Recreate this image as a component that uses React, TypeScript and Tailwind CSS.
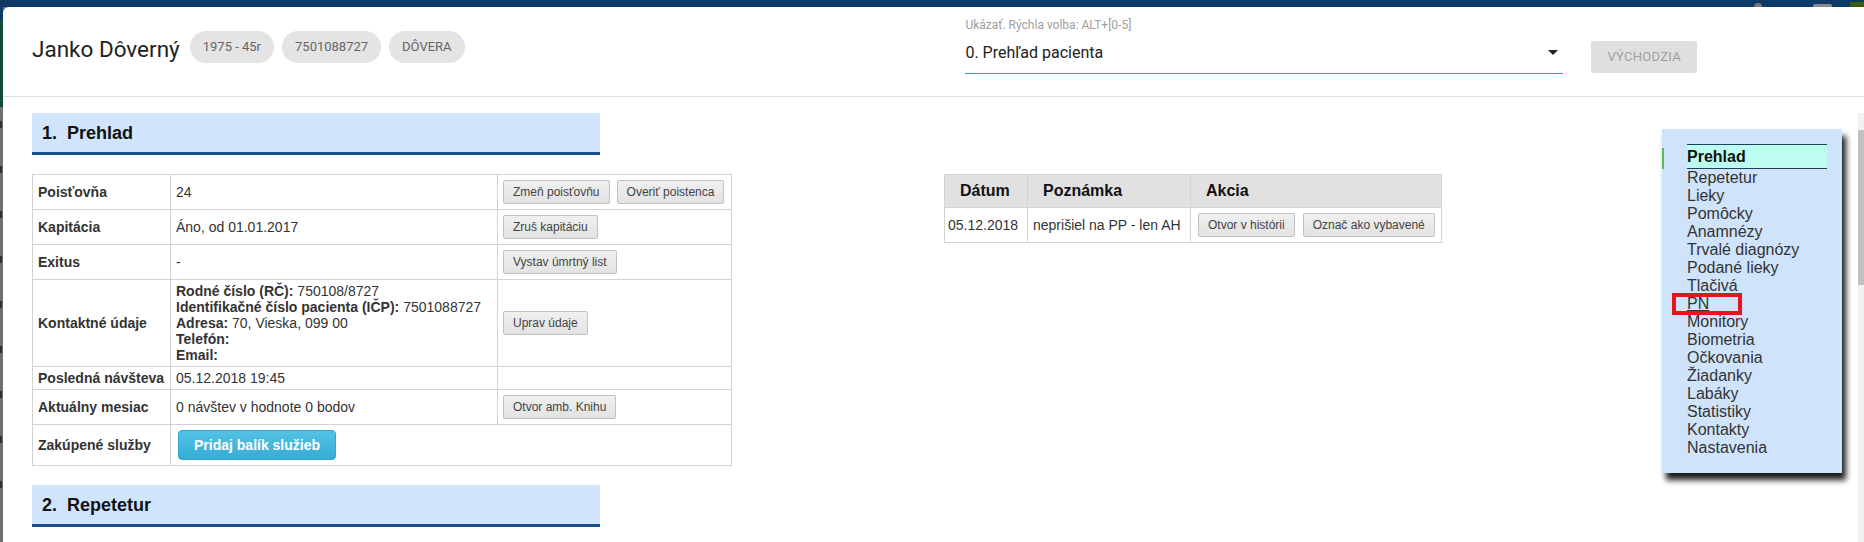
import React from "react";

// ─────────────────────────────────────────────
// Data
// ─────────────────────────────────────────────

const menuItems = [
  "Repetetur",
  "Lieky",
  "Pomôcky",
  "Anamnézy",
  "Trvalé diagnózy",
  "Podané lieky",
  "Tlačivá",
  "PN",
  "Monitory",
  "Biometria",
  "Očkovania",
  "Žiadanky",
  "Labáky",
  "Statistiky",
  "Kontakty",
  "Nastavenia",
];

// ─────────────────────────────────────────────
// Small pieces
// ─────────────────────────────────────────────

function Chip({ children }: { children: React.ReactNode }) {
  return (
    <span className="inline-flex items-center h-[32px] px-[13px] rounded-full bg-[#e4e4e4] text-[13px] text-[#666]">
      {children}
    </span>
  );
}

function GrayBtn({ children }: { children: React.ReactNode }) {
  return (
    <button className="inline-flex items-center h-[24px] my-[2px] px-[9px] rounded-[2px] border border-[#c2c2c2] bg-gradient-to-b from-[#f0f0f0] to-[#e2e2e2] text-[12px] leading-[16px] text-[#444] whitespace-nowrap">
      {children}
    </button>
  );
}

function SectionHeader({ children, className }: { children: React.ReactNode; className?: string }) {
  return (
    <div
      className={
        "w-[568px] h-[42px] bg-[#d0e5fc] border-b-[3px] border-[#1b4f8b] flex items-center pl-[10px] text-[18px] font-bold text-[#111] " +
        (className ?? "")
      }
    >
      {children}
    </div>
  );
}

const td = "border border-[#d3d3d3] px-[5px] py-[3px] align-middle";
const th = "border border-[#d3d3d3] px-[15px] py-[7px] text-left text-[16px] leading-[18px] text-[#111]";

// ─────────────────────────────────────────────
// Page
// ─────────────────────────────────────────────

export default function App() {
  return (
    <div className="relative w-[1864px] h-[542px] overflow-hidden flex flex-col bg-[#6f6f6f] font-['Liberation_Sans',Arial,sans-serif]">
      {/* top strip of the page behind */}
      <div className="relative h-[7px] shrink-0 bg-[#0e3a67]">
        <div className="absolute left-[1754px] top-[3px] w-[8px] h-[4px] rounded-t-full bg-[#777]" />
        <div className="absolute left-[1813px] top-[4px] w-[19px] h-[3px] rounded-t-[2px] bg-[#8a8a8a]" />
        <div className="absolute left-[1850px] top-[2px] w-[14px] h-[5px] bg-[#3b5a12]" />
      </div>

      <div className="flex flex-1 min-h-0">
        {/* left edge of the page behind */}
        <div className="w-[3px] shrink-0 flex flex-col">
          <div className="h-[13px] bg-[#0e3a67]" />
          <div className="h-[87px] bg-[#134a3f]" />
          <div className="flex-1 bg-[#6f6f6f] flex flex-col gap-[38px] pt-[14px]">
            {Array.from({ length: 9 }).map((_, i) => (
              <div key={i} className="h-[7px] w-[2px] bg-[#3a2c20]" />
            ))}
          </div>
        </div>

        {/* Modal */}
        <div className="flex-1 min-w-0 bg-white rounded-tl-[6px] flex flex-col">
          {/* Header */}
          <div className="h-[90px] shrink-0 border-b border-[#e0e0e0] flex pl-[29px] pr-[167px] font-['Roboto',sans-serif]">
            <div className="flex items-center gap-[8px] self-start mt-[21px]">
              <h2 className="text-[22.5px] leading-[32px] text-[#222] mt-[5px] mr-[2px]">Janko Dôverný</h2>
              <Chip>1975 - 45r</Chip>
              <Chip>7501088727</Chip>
              <Chip>DÔVERA</Chip>
            </div>

            <div className="ml-auto w-[598px] self-start mt-[11px]">
              <div className="text-[12px] leading-[14px] text-[#9e9e9e]">Ukázať. Rýchla volba: ALT+[0-5]</div>
              <div className="h-[42px] flex items-center justify-between border-b border-[#26a69a] pr-[5px]">
                <span className="text-[16px] text-[#222]">0. Prehľad pacienta</span>
                <svg width="10" height="5" viewBox="0 0 10 5">
                  <path d="M0 0h10L5 5z" fill="#222" />
                </svg>
              </div>
            </div>

            <button className="self-start mt-[34px] ml-[28px] h-[32px] px-[16px] rounded-[2px] bg-[#dfdfdf] text-[#9f9f9f] text-[13px] tracking-[0.3px] uppercase">
              Východzia
            </button>
          </div>

          {/* Body */}
          <div className="flex-1 min-h-0 flex">
            <div className="flex-1 min-w-0 overflow-hidden pl-[29px] pt-[16px] text-[14px] leading-[16px] text-[#333]">
              <SectionHeader>1.&nbsp; Prehlad</SectionHeader>

              <div className="flex items-start mt-[19px]">
                <table className="table-fixed w-[699px] border-collapse">
                  <colgroup>
                    <col className="w-[138px]" />
                    <col className="w-[327px]" />
                    <col className="w-[234px]" />
                  </colgroup>
                  <tbody>
                    <tr>
                      <td className={td + " font-bold"}>Poisťovňa</td>
                      <td className={td}>24</td>
                      <td className={td}>
                        <div className="flex gap-[7px]">
                          <GrayBtn>Zmeň poisťovňu</GrayBtn>
                          <GrayBtn>Overiť poistenca</GrayBtn>
                        </div>
                      </td>
                    </tr>
                    <tr>
                      <td className={td + " font-bold"}>Kapitácia</td>
                      <td className={td}>Áno, od 01.01.2017</td>
                      <td className={td}>
                        <GrayBtn>Zruš kapitáciu</GrayBtn>
                      </td>
                    </tr>
                    <tr>
                      <td className={td + " font-bold"}>Exitus</td>
                      <td className={td}>-</td>
                      <td className={td}>
                        <GrayBtn>Vystav úmrtný list</GrayBtn>
                      </td>
                    </tr>
                    <tr>
                      <td className={td + " font-bold"}>Kontaktné údaje</td>
                      <td className={td + " whitespace-nowrap"}>
                        <div>
                          <b>Rodné číslo (RČ):</b> 750108/8727
                        </div>
                        <div>
                          <b>Identifikačné číslo pacienta (IČP):</b> 7501088727
                        </div>
                        <div>
                          <b>Adresa:</b> 70, Vieska, 099 00
                        </div>
                        <div>
                          <b>Telefón:</b>
                        </div>
                        <div>
                          <b>Email:</b>
                        </div>
                      </td>
                      <td className={td}>
                        <GrayBtn>Uprav údaje</GrayBtn>
                      </td>
                    </tr>
                    <tr>
                      <td className={td + " font-bold whitespace-nowrap"}>Posledná návšteva</td>
                      <td className={td}>05.12.2018 19:45</td>
                      <td className={td} />
                    </tr>
                    <tr>
                      <td className={td + " font-bold"}>Aktuálny mesiac</td>
                      <td className={td}>0 návštev v hodnote 0 bodov</td>
                      <td className={td}>
                        <GrayBtn>Otvor amb. Knihu</GrayBtn>
                      </td>
                    </tr>
                    <tr>
                      <td className={td + " font-bold"}>Zakúpené služby</td>
                      <td className={td} colSpan={2}>
                        <button className="h-[30px] my-[2px] ml-[2px] px-[15px] rounded-[4px] border border-[#2ea8d2] bg-gradient-to-b from-[#52c2e4] to-[#36acd6] text-white font-bold text-[14px]">
                          Pridaj balík služieb
                        </button>
                      </td>
                    </tr>
                  </tbody>
                </table>

                <table className="table-fixed w-[497px] ml-[212px] border-collapse">
                  <colgroup>
                    <col className="w-[83px]" />
                    <col className="w-[163px]" />
                    <col className="w-[251px]" />
                  </colgroup>
                  <thead>
                    <tr className="bg-[#e1e1e1]">
                      <th className={th}>Dátum</th>
                      <th className={th}>Poznámka</th>
                      <th className={th}>Akcia</th>
                    </tr>
                  </thead>
                  <tbody>
                    <tr>
                      <td className="border border-[#d3d3d3] px-[3px] py-[3px] whitespace-nowrap">05.12.2018</td>
                      <td className="border border-[#d3d3d3] px-[5px] py-[3px] whitespace-nowrap">neprišiel na PP - len AH</td>
                      <td className="border border-[#d3d3d3] pl-[7px] py-[3px]">
                        <div className="flex gap-[8px]">
                          <GrayBtn>Otvor v histórii</GrayBtn>
                          <GrayBtn>Označ ako vybavené</GrayBtn>
                        </div>
                      </td>
                    </tr>
                  </tbody>
                </table>
              </div>

              <SectionHeader className="mt-[19px]">2.&nbsp; Repetetur</SectionHeader>
            </div>

            {/* scrollbar, cut by the window edge */}
            <div className="w-[6px] shrink-0 pt-[16px] flex flex-col">
              <div className="flex-1 bg-[#f1f1f1] pt-[17px]">
                <div className="h-[155px] bg-[#c1c1c1]" />
              </div>
            </div>
          </div>
        </div>
      </div>

      {/* Floating section menu */}
      <div className="absolute left-[1662px] top-[129px] w-[180px] h-[344px] bg-[#cfe3fb] pt-[15px] pl-[25px] pr-[15px] shadow-[4px_7px_6px_rgba(0,0,0,0.9)] text-[16px] leading-[18px] text-[#333]">
        <div className="absolute left-0 top-[19px] w-[2px] h-[21px] bg-[#5cb85c]" />
        <div className="h-[25px] border-y border-[#1f3f5f] bg-[#bcfdef] font-bold text-[#111] leading-[23px]">Prehlad</div>
        {menuItems.map((item) => (
          <div key={item} className={item === "PN" ? "underline" : ""}>
            {item}
          </div>
        ))}
        <div className="absolute left-[10px] top-[164px] w-[70px] h-[22px] border-[4px] border-[#e8141c]" />
      </div>
    </div>
  );
}
